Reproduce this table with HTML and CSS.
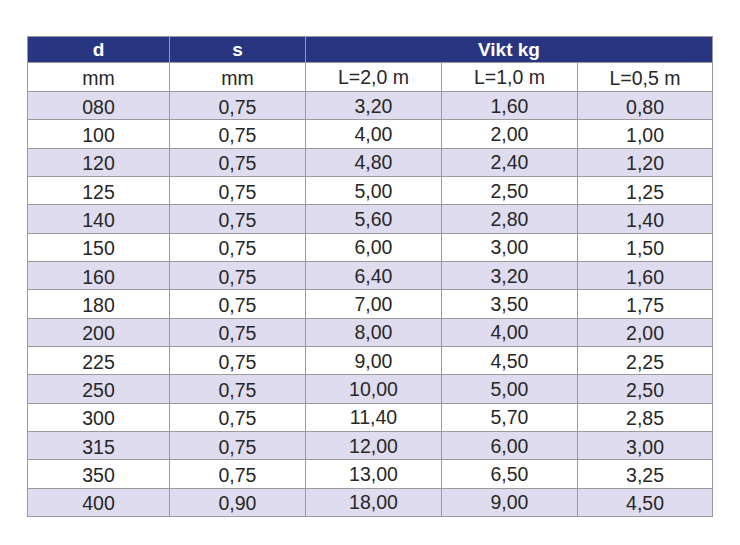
FILE: index.html
```html
<!DOCTYPE html>
<html lang="sv">
<head>
<meta charset="utf-8">
<title>Vikt kg</title>
<link rel="stylesheet" href="styles.css">
</head>
<body>
<table class="spec">
  <colgroup>
    <col class="c1"><col class="c2"><col class="c3"><col class="c4"><col class="c5">
  </colgroup>
  <thead>
    <tr class="head">
      <th>d</th><th>s</th><th colspan="3">Vikt kg</th>
    </tr>
    <tr class="units">
      <td>mm</td><td>mm</td><td class="up">L=2,0 m</td><td class="up">L=1,0 m</td><td>L=0,5 m</td>
    </tr>
  </thead>
  <tbody>
    <tr><td>080</td><td>0,75</td><td class="up">3,20</td><td class="up">1,60</td><td>0,80</td></tr>
    <tr><td>100</td><td>0,75</td><td class="up">4,00</td><td class="up">2,00</td><td>1,00</td></tr>
    <tr><td>120</td><td>0,75</td><td class="up">4,80</td><td class="up">2,40</td><td>1,20</td></tr>
    <tr><td>125</td><td>0,75</td><td class="up">5,00</td><td class="up">2,50</td><td>1,25</td></tr>
    <tr><td>140</td><td>0,75</td><td class="up">5,60</td><td class="up">2,80</td><td>1,40</td></tr>
    <tr><td>150</td><td>0,75</td><td class="up">6,00</td><td class="up">3,00</td><td>1,50</td></tr>
    <tr><td>160</td><td>0,75</td><td class="up">6,40</td><td class="up">3,20</td><td>1,60</td></tr>
    <tr><td>180</td><td>0,75</td><td class="up">7,00</td><td class="up">3,50</td><td>1,75</td></tr>
    <tr><td>200</td><td>0,75</td><td class="up">8,00</td><td class="up">4,00</td><td>2,00</td></tr>
    <tr><td>225</td><td>0,75</td><td class="up">9,00</td><td class="up">4,50</td><td>2,25</td></tr>
    <tr><td>250</td><td>0,75</td><td class="up">10,00</td><td class="up">5,00</td><td>2,50</td></tr>
    <tr><td>300</td><td>0,75</td><td class="up">11,40</td><td class="up">5,70</td><td>2,85</td></tr>
    <tr><td>315</td><td>0,75</td><td class="up">12,00</td><td class="up">6,00</td><td>3,00</td></tr>
    <tr><td>350</td><td>0,75</td><td class="up">13,00</td><td class="up">6,50</td><td>3,25</td></tr>
    <tr><td>400</td><td>0,90</td><td class="up">18,00</td><td class="up">9,00</td><td>4,50</td></tr>
  </tbody>
</table>
</body>
</html>
```

FILE: styles.css
```css
html, body {
  margin: 0;
  padding: 0;
  background: #ffffff;
}

.spec {
  margin: 36px 0 0 27px;
  width: 686px;
  table-layout: fixed;
  border-collapse: separate;
  border-spacing: 0;
  border-top: 1px solid #9a9a9a;
  border-left: 1px solid #9a9a9a;
  font-family: "Liberation Sans", Arial, sans-serif;
  font-size: 19.5px;
  color: #272727;
}

.c1 { width: 142px; }
.c2 { width: 136px; }
.c3 { width: 136px; }
.c4 { width: 136px; }
.c5 { width: 135px; }

.spec th,
.spec td {
  padding: 0;
  border-right: 1px solid #9a9a9a;
  border-bottom: 1px solid #9a9a9a;
  text-align: center;
  vertical-align: middle;
  line-height: 20px;
  white-space: nowrap;
}

.head {
  height: 26px;
}

.head th {
  background: #283580;
  color: #ffffff;
  font-weight: bold;
  font-size: 19px;
  padding-top: 1px;
}

.units {
  height: 29px;
}

.units td {
  padding-top: 2px;
}

.units td.up {
  padding-top: 0;
}

.spec tbody tr {
  height: 28.333px;
}

.spec tbody td {
  padding-top: 2px;
}

.spec tbody td.up {
  padding-top: 0;
}

.spec tbody tr:nth-child(odd) td {
  background: #dedcee;
}
```
